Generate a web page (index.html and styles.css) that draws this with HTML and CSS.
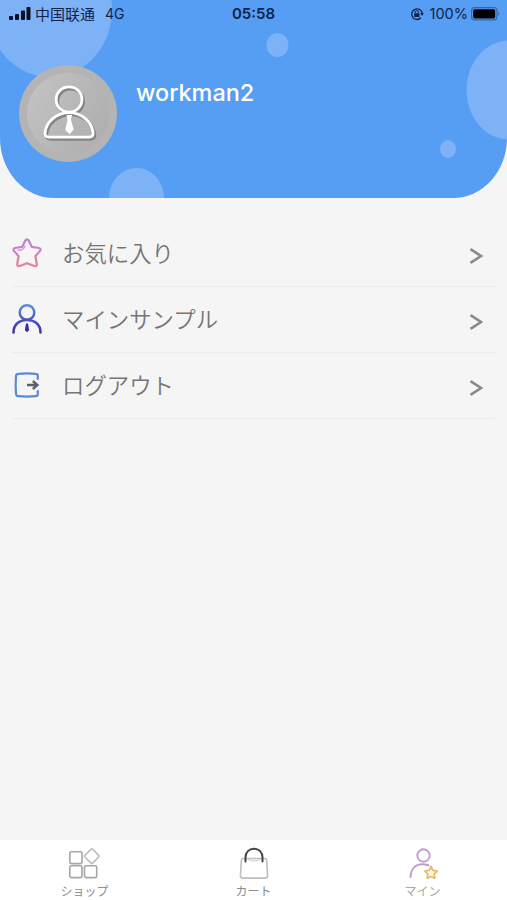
FILE: index.html
```html
<!DOCTYPE html>
<html lang="ja">
<head>
  <meta charset="UTF-8" />
  <meta name="viewport" content="width=device-width, initial-scale=1.0" />
  <title>マイン</title>
  <link rel="stylesheet" href="styles.css">
</head>

<body>

  <header class="header">
    <svg class="bubbles" viewBox="0 0 507 198">
      <ellipse cx="50" cy="10" rx="62" ry="67" />
      <ellipse cx="509" cy="90" rx="42.5" ry="49.5" />
      <ellipse cx="136.5" cy="198" rx="27.5" ry="30" />
      <ellipse cx="277.5" cy="45" rx="11" ry="12" />
      <ellipse cx="448" cy="149" rx="8" ry="9" />
    </svg>

    <div class="status-bar">
      <div class="status-left">
        <svg class="signal" width="22" height="14" viewBox="0 0 22 14">
          <rect x="0" y="9" width="4" height="4" rx="1" />
          <rect x="6" y="7" width="4" height="6" rx="1" />
          <rect x="12" y="3.5" width="4" height="9.5" rx="1" />
          <rect x="17.5" y="0" width="4" height="13" rx="1" />
        </svg>
        <span class="carrier" lang="zh">中国联通</span>
        <span class="network">4G</span>
      </div>
      <span class="clock">05:58</span>
      <div class="status-right">
        <svg width="14" height="14" viewBox="0 0 14 14">
          <path d="M10.9 10.8A5.3 5.3 0 1 1 12.2 6" fill="none" stroke="#10234a" stroke-width="1.3" />
          <path d="M10.2 6h3.6l-1.7 3z" fill="#10234a" />
          <rect x="4.2" y="6.2" width="5.2" height="3.9" rx=".6" fill="#10234a" />
          <path d="M5.2 6.4V5.2a1.6 1.6 0 0 1 3.2 0v1.2" fill="none" stroke="#10234a" />
        </svg>
        <span class="percent">100%</span>
        <svg width="30" height="14" viewBox="0 0 30 14">
          <rect x=".6" y=".6" width="25.3" height="12.3" rx="3" fill="none" stroke="#37659f" stroke-width="1.1" />
          <rect x="2.2" y="2.2" width="22" height="9.2" rx="1.6" fill="#000" />
          <path d="M27.4 4.6q2 2.2 0 4.5z" fill="#37659f" />
        </svg>
      </div>
    </div>

    <div class="profile">
      <div class="avatar">
        <svg width="62" height="62" viewBox="0 0 60 60">
          <g class="avatar-shadow" fill="none" stroke-width="3">
            <ellipse cx="32.5" cy="18" rx="12.5" ry="12.2" />
            <path d="M32.5 30.700c-12.500 0-22 9-23.200 19-.4 3 .8 4.600 3.600 4.600h39.200c2.800 0 4-1.600 3.600-4.600-1.200-10-10.700-19-23.200-19z" />
          </g>
          <g fill="none" stroke="#fff" stroke-width="2.700">
            <ellipse cx="31" cy="16" rx="12.500" ry="12.200" />
            <path d="M31 28.700c-12.500 0-22 9-23.200 19-.4 3 .8 4.600 3.600 4.600h39.200c2.800 0 4-1.600 3.600-4.600-1.200-10-10.700-19-23.200-19z" />
          </g>
          <path d="M28.700 31h5.200l-1.100 4.500 2.700 9.500-3.900 4.500-4.300-4 2.200-9.500z" fill="#fff" />
        </svg>
      </div>
      <span class="username">workman2</span>
    </div>
  </header>

  <ul class="menu">
    <li class="menu-item">
      <svg class="menu-icon" viewBox="0 0 30 30">
        <defs>
          <linearGradient id="starColor" x1="0" y1="0" x2="0" y2="1">
            <stop offset="0" stop-color="#bd7fe0" />
            <stop offset="1" stop-color="#e0829f" />
          </linearGradient>
        </defs>
        <path d="M13.300 2.500q1.700-2.400 3.400 0l3 6.300 7.300 1.200q2.500.8 1 2.900l-4.600 5.300 1.400 7.800q.1 2.600-2.500 2L15 25.200 7.700 28q-2.600.6-2.500-2l1.400-7.800L2 12.900Q.5 10.800 3 10l7.300-1.200z" fill="none" stroke="url(#starColor)" stroke-width="2.200" stroke-linejoin="round" />
        <path d="M6 12.300q5.500.2 7-4" fill="none" stroke="#cf9be2" stroke-width="1.400" stroke-linecap="round" />
      </svg>
      <span class="menu-label">お気に入り</span>
      <svg class="arrow" viewBox="0 0 14 18"><path d="M1.500 2.200 12 9 1.500 15.800" /></svg>
    </li>
    <li class="menu-item">
      <svg class="menu-icon" viewBox="0 0 30 30">
        <defs>
          <linearGradient id="userColor" x1="0" y1="0" x2="0" y2="30" gradientUnits="userSpaceOnUse">
            <stop offset="0" stop-color="#5d94dc" />
            <stop offset=".55" stop-color="#4a52c4" />
            <stop offset="1" stop-color="#4528a0" />
          </linearGradient>
        </defs>
        <g fill="none" stroke="url(#userColor)" stroke-width="2.500" stroke-linecap="round">
          <circle cx="15" cy="8.500" r="7.300" />
          <path d="M1.500 28.500C1.500 20.500 7 16 15 16s13.500 4.500 13.500 12.500" />
        </g>
        <path d="M14 19.500h2l1.200 6.500-2.200 2.200-2.200-2.200z" fill="#4528a0" />
      </svg>
      <span class="menu-label">マインサンプル</span>
      <svg class="arrow" viewBox="0 0 14 18"><path d="M1.500 2.200 12 9 1.500 15.800" /></svg>
    </li>
    <li class="menu-item">
      <svg class="menu-icon" viewBox="0 0 30 30">
        <path d="M25.800 9V6q0-2.200-2.200-2.200-9-.8-17.300 0Q4.200 3.900 4 6q-.7 9 0 18 .2 2 2.300 2.200 8.300.8 17.300 0 2.200 0 2.200-2.200v-3" fill="none" stroke="#5a8bd2" stroke-width="2.200" stroke-linecap="round" />
        <path d="M15 15h9.500M20.800 11l4.700 4-4.700 4" fill="none" stroke="#5b5f70" stroke-width="2.300" />
      </svg>
      <span class="menu-label">ログアウト</span>
      <svg class="arrow" viewBox="0 0 14 18"><path d="M1.500 2.200 12 9 1.500 15.800" /></svg>
    </li>
  </ul>

  <nav class="tab-bar">
    <div class="tab">
      <svg width="32" height="32" viewBox="0 0 32 32" fill="none" stroke="#a6a6a6" stroke-width="1.600">
        <rect x=".8" y="4.800" width="12.200" height="11.800" rx="1.500" />
        <rect x=".8" y="18.800" width="12.200" height="11.800" rx="1.500" />
        <rect x="15.500" y="18.800" width="12.200" height="11.800" rx="1.500" />
        <rect x="17.300" y="3.700" width="11" height="11" rx="1.200" transform="rotate(45 22.800 9.200)" stroke="#bcbcbc" />
      </svg>
      <span>ショップ</span>
    </div>
    <div class="tab">
      <svg width="32" height="32" viewBox="0 0 32 32" fill="none" stroke-linecap="round">
        <path d="M5 11.500h22q1.500 0 1.600 1.500l1 15.500q0 2.600-2.600 2.600H5q-2.600 0-2.600-2.600l1-15.500q.1-1.500 1.600-1.500z" stroke="#bebebe" stroke-width="1.600" />
        <path d="M10 12.500q6 3 12 0" stroke="#ccc" />
        <path d="M7.500 14.500V10.500C7.500 5.200 11 1.700 16 1.700s8.500 3.500 8.500 8.800v4" stroke="#444" stroke-width="2" />
      </svg>
      <span>カート</span>
    </div>
    <div class="tab">
      <svg width="32" height="32" viewBox="0 0 32 32" fill="none">
        <ellipse cx="16.500" cy="8.500" rx="6.200" ry="6.300" stroke="#c79ccf" stroke-width="1.900" />
        <path d="M3.500 30C4 22 8.500 17.300 15 17.300q3.500 0 6.500 1.200" stroke="#c09bc8" stroke-width="1.900" stroke-linecap="round" />
        <path d="m24 19.500 1.900 3.800 4.300.7-3 3.100.6 4.200-3.800-1.800-3.800 1.800.6-4.200-3-3.100 4.300-.7z" fill="#fffaf0" stroke="#e0ba63" stroke-width="1.700" stroke-linejoin="round" />
      </svg>
      <span>マイン</span>
    </div>
  </nav>

</body>
</html>
```
FILE: styles.css
```css
* {
  box-sizing: border-box;
}

body {
  margin: 0;
  height: 100vh;
  display: flex;
  flex-direction: column;
  background: #f5f5f5;
  font-family: Inter, "Noto Sans CJK JP", sans-serif;
}

/* Header */
.header {
  position: relative;
  height: 198px;
  flex-shrink: 0;
  overflow: hidden;
  background: #569ef4;
  border-radius: 0 0 54px 54px / 0 0 60px 60px;
}

.bubbles {
  position: absolute;
  top: 0;
  left: 0;
  width: 100%;
  height: 100%;
  fill: #7eb2f7;
}

.status-bar {
  position: relative;
  display: grid;
  grid-template-columns: 1fr auto 1fr;
  align-items: center;
  height: 27px;
  padding: 0 6px 0 9px;
  font-size: 14px;
  color: #10234a;
}

.status-left,
.status-right {
  display: flex;
  align-items: center;
}

.status-right {
  justify-content: flex-end;
}

.signal {
  fill: #061020;
}

.carrier {
  margin-left: 4px;
  font-family: "Noto Sans CJK SC", sans-serif;
  font-size: 15px;
  line-height: 20px;
}

.network {
  margin-left: 10px;
}

.clock {
  margin-right: 3px;
  font-size: 15px;
  font-weight: 600;
}

.percent {
  margin: 0 3px 0 6px;
  font-size: 14.5px;
}

.profile {
  position: relative;
  display: flex;
  margin: 38px 0 0 19px;
}

.avatar {
  display: flex;
  justify-content: center;
  align-items: center;
  width: 98px;
  height: 97px;
  border: 8px solid #b4b4b4;
  border-radius: 50%;
  background: linear-gradient(120deg, #c4c4c4, #acacac);
}

.avatar svg {
  flex-shrink: 0;
}

.avatar-shadow {
  stroke: #858585;
}

.username {
  margin: 13px 0 0 19px;
  font-size: 23.4px;
  font-weight: 500;
  line-height: 30px;
  color: #fff;
}

/* Menu */
.menu {
  flex: 1;
  margin: 0;
  padding: 22.5px 12px 0;
  list-style: none;
}

.menu-item {
  display: flex;
  align-items: center;
  height: 66px;
  border-bottom: 1px solid #ebebeb;
}

.menu-icon {
  width: 30px;
  height: 30px;
}

.menu-label {
  flex: 1;
  margin: 0 0 3px 20px;
  font-family: "Noto Sans CJK JP", sans-serif;
  font-size: 22.4px;
  font-weight: 350;
  line-height: 30px;
  color: #757575;
}

.arrow {
  width: 14px;
  height: 18px;
  margin: 5px 12px 0 0;
  fill: none;
  stroke: #8a8a8a;
  stroke-width: 2.6;
}

/* Bottom tabs */
.tab-bar {
  display: flex;
  height: 60px;
  flex-shrink: 0;
  background: #fff;
}

.tab {
  flex: 1;
  display: flex;
  flex-direction: column;
  align-items: center;
  gap: 4px;
  padding-top: 7px;
  font-size: 12px;
  line-height: 17px;
  color: #8c8c8c;
}

.tab svg {
  flex-shrink: 0;
}

.tab:last-child {
  color: #aaa;
}
```
